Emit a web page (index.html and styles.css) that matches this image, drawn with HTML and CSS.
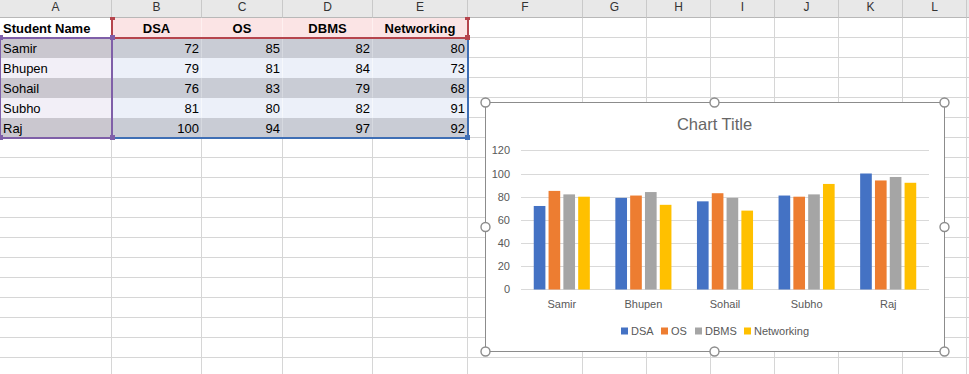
FILE: index.html
```html
<!DOCTYPE html>
<html>
<head>
<meta charset="utf-8">
<link rel="stylesheet" href="styles.css">
</head>
<body>
<div class="wrap">
  <div class="sheet">
    <div class="h">A</div><div class="h">B</div><div class="h">C</div><div class="h">D</div><div class="h">E</div><div class="h">F</div><div class="h">G</div><div class="h">H</div><div class="h">I</div><div class="h">J</div><div class="h">K</div><div class="h">L</div><div class="h"></div>

    <div class="c b">Student Name</div><div class="c b pk ctr">DSA</div><div class="c b pk ctr">OS</div><div class="c b pk ctr">DBMS</div><div class="c b pk ctr">Networking</div>
    <div class="c"></div><div class="c"></div><div class="c"></div><div class="c"></div><div class="c"></div><div class="c"></div><div class="c"></div><div class="c"></div>

    <div class="c ad">Samir</div><div class="c bd n">72</div><div class="c bd n">85</div><div class="c bd n">82</div><div class="c bd n">80</div>
    <div class="c"></div><div class="c"></div><div class="c"></div><div class="c"></div><div class="c"></div><div class="c"></div><div class="c"></div><div class="c"></div>

    <div class="c al">Bhupen</div><div class="c bl n">79</div><div class="c bl n">81</div><div class="c bl n">84</div><div class="c bl n">73</div>
    <div class="c"></div><div class="c"></div><div class="c"></div><div class="c"></div><div class="c"></div><div class="c"></div><div class="c"></div><div class="c"></div>

    <div class="c ad">Sohail</div><div class="c bd n">76</div><div class="c bd n">83</div><div class="c bd n">79</div><div class="c bd n">68</div>
    <div class="c"></div><div class="c"></div><div class="c"></div><div class="c"></div><div class="c"></div><div class="c"></div><div class="c"></div><div class="c"></div>

    <div class="c al">Subho</div><div class="c bl n">81</div><div class="c bl n">80</div><div class="c bl n">82</div><div class="c bl n">91</div>
    <div class="c"></div><div class="c"></div><div class="c"></div><div class="c"></div><div class="c"></div><div class="c"></div><div class="c"></div><div class="c"></div>

    <div class="c ad">Raj</div><div class="c bd n">100</div><div class="c bd n">94</div><div class="c bd n">97</div><div class="c bd n">92</div>
    <div class="c"></div><div class="c"></div><div class="c"></div><div class="c"></div><div class="c"></div><div class="c"></div><div class="c"></div><div class="c"></div>

    <div class="c"></div><div class="c"></div><div class="c"></div><div class="c"></div><div class="c"></div><div class="c"></div><div class="c"></div><div class="c"></div><div class="c"></div><div class="c"></div><div class="c"></div><div class="c"></div><div class="c"></div>
    <div class="c"></div><div class="c"></div><div class="c"></div><div class="c"></div><div class="c"></div><div class="c"></div><div class="c"></div><div class="c"></div><div class="c"></div><div class="c"></div><div class="c"></div><div class="c"></div><div class="c"></div>
    <div class="c"></div><div class="c"></div><div class="c"></div><div class="c"></div><div class="c"></div><div class="c"></div><div class="c"></div><div class="c"></div><div class="c"></div><div class="c"></div><div class="c"></div><div class="c"></div><div class="c"></div>
    <div class="c"></div><div class="c"></div><div class="c"></div><div class="c"></div><div class="c"></div><div class="c"></div><div class="c"></div><div class="c"></div><div class="c"></div><div class="c"></div><div class="c"></div><div class="c"></div><div class="c"></div>
    <div class="c"></div><div class="c"></div><div class="c"></div><div class="c"></div><div class="c"></div><div class="c"></div><div class="c"></div><div class="c"></div><div class="c"></div><div class="c"></div><div class="c"></div><div class="c"></div><div class="c"></div>
    <div class="c"></div><div class="c"></div><div class="c"></div><div class="c"></div><div class="c"></div><div class="c"></div><div class="c"></div><div class="c"></div><div class="c"></div><div class="c"></div><div class="c"></div><div class="c"></div><div class="c"></div>
    <div class="c"></div><div class="c"></div><div class="c"></div><div class="c"></div><div class="c"></div><div class="c"></div><div class="c"></div><div class="c"></div><div class="c"></div><div class="c"></div><div class="c"></div><div class="c"></div><div class="c"></div>
    <div class="c"></div><div class="c"></div><div class="c"></div><div class="c"></div><div class="c"></div><div class="c"></div><div class="c"></div><div class="c"></div><div class="c"></div><div class="c"></div><div class="c"></div><div class="c"></div><div class="c"></div>
    <div class="c"></div><div class="c"></div><div class="c"></div><div class="c"></div><div class="c"></div><div class="c"></div><div class="c"></div><div class="c"></div><div class="c"></div><div class="c"></div><div class="c"></div><div class="c"></div><div class="c"></div>
    <div class="c"></div><div class="c"></div><div class="c"></div><div class="c"></div><div class="c"></div><div class="c"></div><div class="c"></div><div class="c"></div><div class="c"></div><div class="c"></div><div class="c"></div><div class="c"></div><div class="c"></div>
    <div class="c"></div><div class="c"></div><div class="c"></div><div class="c"></div><div class="c"></div><div class="c"></div><div class="c"></div><div class="c"></div><div class="c"></div><div class="c"></div><div class="c"></div><div class="c"></div><div class="c"></div>
    <div class="c"></div><div class="c"></div><div class="c"></div><div class="c"></div><div class="c"></div><div class="c"></div><div class="c"></div><div class="c"></div><div class="c"></div><div class="c"></div><div class="c"></div><div class="c"></div><div class="c"></div>
  </div>

  <div class="sel sel-blue"></div>
  <div class="sel sel-red"></div>
  <div class="sel sel-purple"></div>

  <div class="hd hd-purple hp1"></div>
  <div class="hd hd-purple hp2"></div>
  <div class="hd hd-purple hp3"></div>
  <div class="hd hd-purple hp4"></div>
  <div class="hd hd-red hr1"></div>
  <div class="hd hd-red hr2"></div>
  <div class="hd hd-red hr3"></div>
  <div class="hd hd-blue hb1"></div>

  <div class="chart">
    <svg class="chart-svg" width="460" height="250" viewBox="0 0 460 250">
      <rect x="0.5" y="0.5" width="459" height="249" fill="#fff" stroke="#8c8c8c" stroke-width="1"/>
      <text class="title" x="229.5" y="28" text-anchor="middle">Chart Title</text>

      <g stroke="#d9d9d9" stroke-width="1">
        <line x1="36" y1="48.5" x2="444" y2="48.5"/>
        <line x1="36" y1="72.5" x2="444" y2="72.5"/>
        <line x1="36" y1="95.5" x2="444" y2="95.5"/>
        <line x1="36" y1="118.5" x2="444" y2="118.5"/>
        <line x1="36" y1="141.5" x2="444" y2="141.5"/>
        <line x1="36" y1="164.5" x2="444" y2="164.5"/>
        <line x1="36" y1="187.5" x2="444" y2="187.5"/>
      </g>

      <g class="ylab" text-anchor="end">
        <text x="25" y="52">120</text>
        <text x="25" y="76">100</text>
        <text x="25" y="99">80</text>
        <text x="25" y="122">60</text>
        <text x="25" y="145">40</text>
        <text x="25" y="168">20</text>
        <text x="25" y="191">0</text>
      </g>

      <g fill="#4472c4">
        <rect x="48.75" y="103.98" width="11.66" height="83.52"/>
        <rect x="130.35" y="95.86" width="11.66" height="91.64"/>
        <rect x="211.95" y="99.34" width="11.66" height="88.16"/>
        <rect x="293.55" y="93.54" width="11.66" height="93.96"/>
        <rect x="375.15" y="71.5" width="11.66" height="116"/>
      </g>
      <g fill="#ed7d31">
        <rect x="63.56" y="88.9" width="11.66" height="98.6"/>
        <rect x="145.16" y="93.54" width="11.66" height="93.96"/>
        <rect x="226.76" y="91.22" width="11.66" height="96.28"/>
        <rect x="308.36" y="94.7" width="11.66" height="92.8"/>
        <rect x="389.96" y="78.46" width="11.66" height="109.04"/>
      </g>
      <g fill="#a5a5a5">
        <rect x="78.37" y="92.38" width="11.66" height="95.12"/>
        <rect x="159.97" y="90.06" width="11.66" height="97.44"/>
        <rect x="241.57" y="95.86" width="11.66" height="91.64"/>
        <rect x="323.17" y="92.38" width="11.66" height="95.12"/>
        <rect x="404.77" y="74.98" width="11.66" height="112.52"/>
      </g>
      <g fill="#ffc000">
        <rect x="93.18" y="94.7" width="11.66" height="92.8"/>
        <rect x="174.78" y="102.82" width="11.66" height="84.68"/>
        <rect x="256.38" y="108.62" width="11.66" height="78.88"/>
        <rect x="337.98" y="81.94" width="11.66" height="105.56"/>
        <rect x="419.58" y="80.78" width="11.66" height="106.72"/>
      </g>

      <g class="xlab" text-anchor="middle">
        <text x="76.8" y="206">Samir</text>
        <text x="158.4" y="206">Bhupen</text>
        <text x="240" y="206">Sohail</text>
        <text x="321.6" y="206">Subho</text>
        <text x="403.2" y="206">Raj</text>
      </g>

      <g class="legend">
        <rect x="136" y="225.5" width="7" height="7" fill="#4472c4"/>
        <text x="146" y="233">DSA</text>
        <rect x="176" y="225.5" width="7" height="7" fill="#ed7d31"/>
        <text x="186" y="233">OS</text>
        <rect x="210" y="225.5" width="7" height="7" fill="#a5a5a5"/>
        <text x="220" y="233">DBMS</text>
        <rect x="259" y="225.5" width="7" height="7" fill="#ffc000"/>
        <text x="269" y="233">Networking</text>
      </g>

      <g fill="#fff" stroke="#8c8c8c" stroke-width="1.4">
        <circle cx="0.5" cy="0.5" r="4.5"/>
        <circle cx="229.5" cy="0.5" r="4.5"/>
        <circle cx="459.5" cy="0.5" r="4.5"/>
        <circle cx="0.5" cy="125" r="4.5"/>
        <circle cx="459.5" cy="125" r="4.5"/>
        <circle cx="0.5" cy="249.5" r="4.5"/>
        <circle cx="229.5" cy="249.5" r="4.5"/>
        <circle cx="459.5" cy="249.5" r="4.5"/>
      </g>
    </svg>
  </div>
</div>
</body>
</html>
```
FILE: styles.css
```css
html, body {
  margin: 0;
  padding: 0;
  background: #fff;
}
body {
  font-family: "Liberation Sans", Arial, sans-serif;
  color: #000;
}
.wrap {
  position: relative;
  width: 969px;
  height: 374px;
  overflow: hidden;
}
.sheet {
  display: grid;
  grid-template-columns: 112px 90px 81px 90px 95px 115px repeat(7, 64px);
  grid-template-rows: 18px;
  grid-auto-rows: 20px;
}
.h {
  box-sizing: border-box;
  background: #e8e8e8;
  border-right: 1px solid #c9c9c9;
  border-bottom: 1px solid #b8b8b8;
  color: #333;
  font-size: 12px;
  line-height: 15px;
  text-align: center;
}
.c {
  box-sizing: border-box;
  border-right: 1px solid #d6d6d6;
  border-bottom: 1px solid #d6d6d6;
  font-size: 13px;
  line-height: 20px;
  padding: 1px 3px 0 3px;
  white-space: nowrap;
  overflow: hidden;
}
.b { font-weight: bold; }
.ctr { text-align: center; }
.n { text-align: right; padding-right: 2px; }
.pk { background: #fbe4e5; border-right-color: #fdf0f0; border-bottom-color: transparent; }
.ad { background: #cac7cf; border-right-color: transparent; border-bottom-color: transparent; }
.al { background: #f2eff7; border-right-color: transparent; border-bottom-color: transparent; }
.bd { background: #c9ccd5; border-right-color: #d6d9e0; border-bottom-color: transparent; }
.bl { background: #ecf0f9; border-right-color: #f6f8fc; border-bottom-color: transparent; }

.sel {
  position: absolute;
  box-sizing: border-box;
}
.sel-blue {
  left: 111px; top: 37px; width: 358px; height: 102px;
  border: 2px solid #3f6fb5;
}
.sel-red {
  left: 111px; top: 17px; width: 358px; height: 22px;
  border: 2px solid #b5454d;
  border-top: none;
}
.sel-purple {
  left: -1px; top: 37px; width: 114px; height: 102px;
  border: 2px solid #7f5fa8;
}
.hd {
  position: absolute;
  width: 5px;
  height: 5px;
}
.hd-purple { background: #7f5fa8; }
.hd-red { background: #b5454d; }
.hd-blue { background: #3f6fb5; }
.hp1 { left: -2px; top: 35px; }
.hp2 { left: 110px; top: 35px; }
.hp3 { left: -2px; top: 135px; }
.hp4 { left: 110px; top: 135px; }
.hr1 { left: 110px; top: 17px; height: 3px; }
.hr2 { left: 465px; top: 17px; height: 3px; }
.hr3 { left: 465px; top: 35px; }
.hb1 { left: 465px; top: 135px; }

.chart {
  position: absolute;
  left: 485px;
  top: 102px;
  width: 460px;
  height: 250px;
}
.chart-svg {
  display: block;
  overflow: visible;
  font-family: "Liberation Sans", Arial, sans-serif;
}
.title {
  font-size: 16.5px;
  fill: #666;
}
.ylab text, .xlab text {
  font-size: 11px;
  fill: #595959;
}
.legend text {
  font-size: 11px;
  fill: #595959;
}
```
